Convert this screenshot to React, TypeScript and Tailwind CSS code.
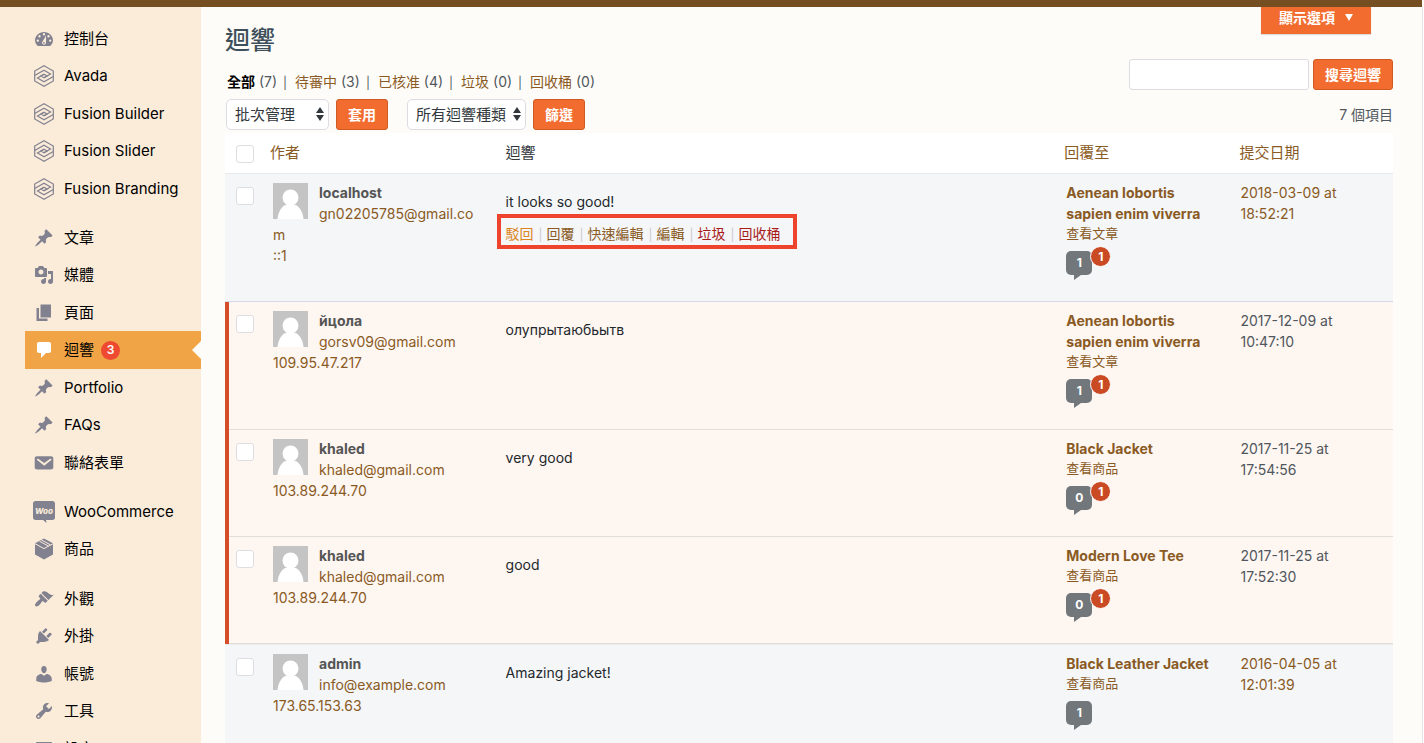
import type { ReactNode } from 'react';

type MenuItem = { label: string; icon: ReactNode; count?: number };

type Comment = {
  id: number;
  author: string;
  email: string;
  ip: string;
  text: string;
  post: string;
  view: string;
  date: string;
  approved: number;
  pending?: number;
  unapproved?: boolean;
  showActions?: boolean;
};

const pin = (
  <Icon d="M10.44 3.02l1.82-1.82 6.36 6.35-1.83 1.82c-1.05-.68-2.48-.57-3.41.36l-.75.75c-.92.93-1.04 2.35-.35 3.41l-1.83 1.82-2.41-2.41-2.8 2.79c-.42.42-3.38 2.71-3.8 2.29s1.86-3.39 2.28-3.81l2.79-2.79L4.1 9.36l1.83-1.82c1.05.69 2.48.57 3.4-.36l.75-.75c.93-.92 1.05-2.35.36-3.41z" />
);

const menu: MenuItem[][] = [
  [
    {
      label: '控制台',
      icon: (
        <Icon d="M3.76 17h12.48C17.34 15.63 19 13.89 19 11.5c0-4.42-4-8.5-9-8.5s-9 4.08-9 8.5c0 2.39 1.66 4.13 2.76 5.5zM10 4a1.2 1.2 0 110 2.4 1.2 1.2 0 010-2.4zM5.5 6a1.2 1.2 0 110 2.4 1.2 1.2 0 010-2.4zm9 0a1.2 1.2 0 110 2.4 1.2 1.2 0 010-2.4zM3.8 10.4a1.2 1.2 0 110 2.4 1.2 1.2 0 010-2.4zm12.4 0a1.2 1.2 0 110 2.4 1.2 1.2 0 010-2.4zM12.1 6.5l-.1 7.2c0 1.2-.9 2-2 2s-2-.8-2-1.9c0-.5.2-1 .6-1.4zM10 12.9a.9.9 0 100 1.8.9.9 0 000-1.8z" />
      ),
    },
    { label: 'Avada', icon: <HexIcon /> },
    { label: 'Fusion Builder', icon: <HexIcon /> },
    { label: 'Fusion Slider', icon: <HexIcon /> },
    { label: 'Fusion Branding', icon: <HexIcon /> },
  ],
  [
    { label: '文章', icon: pin },
    {
      label: '媒體',
      icon: (
        <Icon d="M13 11V4c0-.55-.45-1-1-1h-1.67L9 1H5L3.67 3H2c-.55 0-1 .45-1 1v7c0 .55.45 1 1 1h10c.55 0 1-.45 1-1zM7 4.5c1.38 0 2.5 1.12 2.5 2.5S8.38 9.5 7 9.5 4.5 8.38 4.5 7 5.62 4.5 7 4.5zM14 6h5v10.5c0 1.38-1.12 2.5-2.5 2.5S14 17.88 14 16.5s1.12-2.5 2.5-2.5c.17 0 .34.02.5.05V9h-3V6zm-4 8.05V13h2v3.5c0 1.38-1.12 2.5-2.5 2.5S7 17.88 7 16.5 8.12 14 9.5 14c.17 0 .34.02.5.05z" />
      ),
    },
    { label: '頁面', icon: <Icon d="M6.500 14.500V1.500H17v13H6.500zM5 15.500h8.500V18H2.500V5H5v10.500z" /> },
    {
      label: '迴響',
      icon: <Icon d="M5 2h10c1.100 0 2 .9 2 2v7c0 1.100-.9 2-2 2h-3l-5 5v-5H5c-1.100 0-2-.9-2-2V4c0-1.100.9-2 2-2z" />,
      count: 3,
    },
    { label: 'Portfolio', icon: pin },
    { label: 'FAQs', icon: pin },
    {
      label: '聯絡表單',
      icon: (
        <Icon d="M3.050 3.300h13.900C18.370 3.300 19.300 4 19.300 5.300v9.200c0 1.300-.93 2-2.350 2H3.050c-1.420 0-2.350-.7-2.350-2V5.300c0-1.300.93-2 2.350-2zM10.200 12.800l7.030-5.730c.24-.2.43-.66.13-1.070-.29-.41-.82-.42-1.170-.17l-5.990 4.060L4.200 5.830c-.35-.25-.88-.24-1.170.17-.3.41-.11.870.13 1.070z" />
      ),
    },
  ],
  [
    { label: 'WooCommerce', icon: <WooIcon /> },
    { label: '商品', icon: <BoxIcon /> },
  ],
  [
    {
      label: '外觀',
      icon: (
        <Icon d="M14.48 11.06L7.41 3.99l1.5-1.5c.5-.56 2.3-.47 3.51.32 1.21.8 1.43 1.28 2.91 2.1 1.18.64 2.45 1.26 4.45.85zm-.71.71L6.7 4.7 4.93 6.47c-.39.39-.39 1.02 0 1.41l1.06 1.06c.39.39.39 1.03 0 1.42-.6.6-1.43 1.11-2.21 1.69-.35.26-.7.53-1.01.84C1.43 14.23.4 16.08 1.4 17.07c.99 1 2.84-.03 4.18-1.36.31-.31.58-.66.85-1.02.57-.78 1.08-1.61 1.69-2.21.39-.39 1.02-.39 1.41 0l1.06 1.06c.39.39 1.02.39 1.41 0z" />
      ),
    },
    {
      label: '外掛',
      icon: (
        <Icon d="M13.11 4.36L9.87 7.6 8 5.73l3.24-3.24c.35-.34 1.05-.2 1.56.32.52.51.66 1.21.31 1.55zm-8 1.77l.91-1.12 9.01 9.01-1.19.84c-.71.71-2.63 1.16-3.82 1.16H6.14L4.9 17.26c-.59.59-1.54.59-2.12 0-.59-.58-.59-1.53 0-2.12l1.24-1.24v-3.88c0-1.13.4-3.19 1.09-3.89zm7.26 3.97l3.24-3.24c.34-.35 1.04-.21 1.55.31.52.51.66 1.21.31 1.55l-3.24 3.25z" />
      ),
    },
    {
      label: '帳號',
      icon: (
        <Icon d="M10 9.25c-2.27 0-2.73-3.44-2.73-3.44C7 4.02 7.82 2 9.97 2c2.16 0 2.98 2.02 2.71 3.81 0 0-.41 3.44-2.68 3.44zm0 2.57L12.72 10c2.39 0 5.02 2.33 5.02 4.53v2.49s-3.65 1.53-7.74 1.53c-4.15 0-7.74-1.53-7.74-1.53v-2.49c0-2.25 2.44-4.48 4.97-4.48z" />
      ),
    },
    {
      label: '工具',
      icon: (
        <Icon d="M16.68 9.77c-1.34 1.34-3.3 1.67-4.95.99l-5.41 6.52c-.99.99-2.59.99-3.58 0s-.99-2.59 0-3.57l6.52-5.42c-.68-1.65-.35-3.61.99-4.95 1.28-1.28 3.12-1.62 4.72-1.06l-2.89 2.89 2.82 2.82 2.86-2.87c.53 1.58.18 3.39-1.08 4.65zM3.81 16.21c.4.39 1.04.39 1.43 0 .4-.4.4-1.04 0-1.43-.39-.4-1.03-.4-1.43 0-.39.39-.39 1.03 0 1.43z" />
      ),
    },
    {
      label: '設定',
      icon: (
        <Icon d="M18 16V4c0-.55-.45-1-1-1H3c-.55 0-1 .45-1 1v12c0 .55.45 1 1 1h14c.55 0 1-.45 1-1zM5.5 5h1v4h-1zm4 0h1v7h-1zm4 0h1v3h-1zM4 10h4v2H4zm4 3h4v2H8zm4-4h4v2h-4z" />
      ),
    },
  ],
];

const tabs = [
  { label: '全部', count: 7 },
  { label: '待審中', count: 3 },
  { label: '已核准', count: 4 },
  { label: '垃圾', count: 0 },
  { label: '回收桶', count: 0 },
];

const actions = [
  { label: '駁回', color: 'text-[#dc8420]' },
  { label: '回覆', color: 'text-[#8a5a24]' },
  { label: '快速編輯', color: 'text-[#8a5a24]' },
  { label: '編輯', color: 'text-[#8a5a24]' },
  { label: '垃圾', color: 'text-[#a81c1c]' },
  { label: '回收桶', color: 'text-[#a81c1c]' },
];

const comments: Comment[] = [
  {
    id: 1,
    author: 'localhost',
    email: 'gn02205785@gmail.com',
    ip: '::1',
    text: 'it looks so good!',
    post: 'Aenean lobortis sapien enim viverra',
    view: '查看文章',
    date: '2018-03-09 at 18:52:21',
    approved: 1,
    pending: 1,
    showActions: true,
  },
  {
    id: 2,
    author: 'йцола',
    email: 'gorsv09@gmail.com',
    ip: '109.95.47.217',
    text: 'олупрытаюбьытв',
    post: 'Aenean lobortis sapien enim viverra',
    view: '查看文章',
    date: '2017-12-09 at 10:47:10',
    approved: 1,
    pending: 1,
    unapproved: true,
  },
  {
    id: 3,
    author: 'khaled',
    email: 'khaled@gmail.com',
    ip: '103.89.244.70',
    text: 'very good',
    post: 'Black Jacket',
    view: '查看商品',
    date: '2017-11-25 at 17:54:56',
    approved: 0,
    pending: 1,
    unapproved: true,
  },
  {
    id: 4,
    author: 'khaled',
    email: 'khaled@gmail.com',
    ip: '103.89.244.70',
    text: 'good',
    post: 'Modern Love Tee',
    view: '查看商品',
    date: '2017-11-25 at 17:52:30',
    approved: 0,
    pending: 1,
    unapproved: true,
  },
  {
    id: 5,
    author: 'admin',
    email: 'info@example.com',
    ip: '173.65.153.63',
    text: 'Amazing jacket!',
    post: 'Black Leather Jacket',
    view: '查看商品',
    date: '2016-04-05 at 12:01:39',
    approved: 1,
  },
];

export default function App() {
  return (
    <div className="flex min-h-screen flex-col bg-[#fefcf8] font-['Inter','Noto_Sans_CJK_TC',sans-serif] text-sm text-[#50575d]">
      <div className="mr-0.5 h-[7px] bg-[#754f22]" />
      <div className="flex flex-1">
        <Sidebar />
        <main className="min-w-0 flex-1 pr-[29px] pl-6">
          <div className="flex h-[52px] items-start justify-between">
            <h1 className="pt-4 text-[25px] leading-[34px] font-medium text-[#3d4f5a]">迴響</h1>
            <button
              type="button"
              className="mr-[22px] flex h-[27px] items-center gap-2.5 bg-[#f26c30] px-[18px] pb-1.5 text-sm font-bold text-white shadow-[0_1px_1px_#ddd]"
            >
              顯示選項
              <svg viewBox="0 0 8 7" className="h-[7px] w-2" fill="currentColor">
                <path d="M0 0h8L4 7z" />
              </svg>
            </button>
          </div>

          <div className="flex h-10 items-start justify-between">
            <ul className="flex pt-[13px] pl-0.5 leading-5">
              {tabs.map((tab, i) => (
                <li key={tab.label} className="whitespace-pre">
                  <a href="#" className={i === 0 ? 'font-bold text-black' : 'text-[#8a5a24]'}>
                    {tab.label}
                  </a>
                  {` (${tab.count})`}
                  {i < tabs.length - 1 && <span className="pr-2 pl-1.5 text-xs">|</span>}
                </li>
              ))}
            </ul>
            <form className="flex gap-1" onSubmit={(e) => e.preventDefault()}>
              <input
                type="search"
                aria-label="搜尋迴響"
                className="h-[31px] w-[180px] rounded-[3px] border border-[#dcdce2] bg-white px-2"
              />
              <Button>搜尋迴響</Button>
            </form>
          </div>

          <div className="mb-[3px] flex items-center justify-between">
            <div className="flex items-center pl-px">
              <Select label="批次管理" width="w-[103px]" />
              <div className="mr-[19px] ml-[7px] flex">
                <Button>套用</Button>
              </div>
              <Select label="所有迴響種類" width="w-[119px]" />
              <div className="ml-[7px] flex">
                <Button>篩選</Button>
              </div>
            </div>
            <span>7 個項目</span>
          </div>

          <CommentTable />
        </main>
        <div className="w-0.5 border-l border-[#e4e4ea] bg-white" />
      </div>
    </div>
  );
}

function Sidebar() {
  return (
    <aside className="w-[201px] shrink-0 bg-[#fbecda] pt-[13px] pl-[25px]">
      <nav className="flex flex-col gap-3">
        {menu.map((group) => (
          <ul key={group[0].label}>
            {group.map((item) => (
              <li key={item.label} className="odd:h-[37px] even:h-[38px]">
                <a
                  href="#"
                  className={
                    item.count
                      ? 'relative flex h-full items-center gap-2.5 bg-[#f0a445] pl-[9px] text-[15px] text-black'
                      : 'flex h-full items-center gap-2.5 pl-[9px] text-[15px] text-black'
                  }
                >
                  <span className={item.count ? 'text-white' : 'text-[#82818f]'}>{item.icon}</span>
                  {item.label}
                  {item.count && (
                    <>
                      <span className="-ml-[3px] flex size-[19px] items-center justify-center rounded-full bg-[#ee4a31] text-xs font-semibold text-white">
                        {item.count}
                      </span>
                      <svg viewBox="0 0 9 18" className="absolute right-0 h-[18px] w-[9px]" fill="#fefcf8">
                        <path d="M9 0v18L0 9z" />
                      </svg>
                    </>
                  )}
                </a>
              </li>
            ))}
          </ul>
        ))}
      </nav>
    </aside>
  );
}

function CommentTable() {
  return (
    <table className="w-full table-fixed border-separate border-spacing-0 text-left">
      <thead className="bg-white text-[15px] leading-5">
        <tr>
          <th className="h-10 w-[37px] pt-0.5 pl-[11px]">
            <Checkbox label="全選" />
          </th>
          <th className="w-[20%] pl-2 font-normal">
            <a href="#" className="text-[#8a5a24]">作者</a>
          </th>
          <th className="pl-2.5 font-normal text-[#32373c]">迴響</th>
          <th className="w-[15%] pl-2.5 font-normal">
            <a href="#" className="text-[#8a5a24]">回覆至</a>
          </th>
          <th className="w-[14%] pl-2.5 font-normal">
            <a href="#" className="text-[#8a5a24]">提交日期</a>
          </th>
        </tr>
      </thead>
      <tbody className="align-top leading-[21px]">
        {comments.map((c) => (
          <CommentRow key={c.id} comment={c} />
        ))}
      </tbody>
    </table>
  );
}

function CommentRow({ comment: c }: { comment: Comment }) {
  const line = c.unapproved ? 'border-b border-[#e1dfdc]' : 'border-y border-t-[#e9eaec] border-b-[#d5dae4]';
  return (
    <tr className={c.unapproved ? 'bg-[#fef6f1]' : 'bg-[#f4f6f8]'}>
      <td
        className={
          c.unapproved
            ? 'pt-[13px] pl-[11px] shadow-[inset_4px_0_0_#d54e2a,inset_0_-1px_0_#e1dfdc]'
            : `pt-[13px] pl-[11px] ${line}`
        }
      >
        <Checkbox label={`選取 ${c.author}`} />
      </td>
      <td className={`pt-2 pr-4 pl-[11px] break-all ${line}`}>
        <Avatar />
        <strong className="font-bold text-[#555]">{c.author}</strong>
        <br />
        <a href="#" className="text-[#8a5a24]">{c.email}</a>
        <br />
        <a href="#" className="text-[#8a5a24]">{c.ip}</a>
      </td>
      <td className={`pt-[17px] pl-2.5 ${line}`}>
        <p className="leading-[22px] text-[#23282d]">{c.text}</p>
        {c.showActions && (
          <div className="mt-px -ml-[9px] flex h-[35px] w-fit items-center border-4 border-[#ee432d] pt-1 pr-3 pl-[5px]">
            {actions.map((a, i) => (
              <span key={a.label}>
                {i > 0 && <span className="pr-1 pl-[5px] text-xs text-[#ccc]">|</span>}
                <a href="#" className={a.color}>{a.label}</a>
              </span>
            ))}
          </div>
        )}
      </td>
      <td className={`pt-2 pr-2.5 pb-[26px] pl-3 ${line}`}>
        <a href="#" className="block font-bold text-[#8a5a24]">{c.post}</a>
        <a href="#" className="block text-[13px] leading-[18px] text-[#8a5a24]">{c.view}</a>
        <Bubble approved={c.approved} pending={c.pending} />
      </td>
      <td className={`pt-2 pr-8 pl-[11px] ${line}`}>
        {c.unapproved ? c.date : <a href="#" className="text-[#8a5a24]">{c.date}</a>}
      </td>
    </tr>
  );
}

function Bubble({ approved, pending }: { approved: number; pending?: number }) {
  return (
    <a href="#" className="relative mt-[9px] flex h-6 w-[26px] items-center justify-center rounded-[5px] bg-[#72777c] text-xs font-bold text-white">
      {approved}
      <svg viewBox="0 0 7 5" className="absolute top-full left-2 h-[5px] w-[7px]" fill="#72777c">
        <path d="M0 0h7L0 5z" />
      </svg>
      {pending && (
        <span className="absolute -top-[5px] left-6 flex size-[21px] items-center justify-center rounded-full border border-white bg-[#ca4a24] text-xs">
          {pending}
        </span>
      )}
    </a>
  );
}

function Button({ children }: { children: ReactNode }) {
  return (
    <button
      type="button"
      className="h-[31px] rounded-[3px] border border-[#cf5a22] bg-[#f26c30] px-[11px] text-sm font-bold text-white"
    >
      {children}
    </button>
  );
}

function Select({ label, width }: { label: string; width: string }) {
  return (
    <div className={`relative ${width}`}>
      <select
        aria-label={label}
        className="h-[31px] w-full appearance-none rounded-[5px] border border-[#dcdce2] bg-white pl-2 text-[15px] text-[#32373c]"
      >
        <option>{label}</option>
      </select>
      <svg viewBox="0 0 8 14" className="pointer-events-none absolute top-2 right-[5px] h-3.5 w-2" fill="#32373c">
        <path d="M4 0l4 6H0zM0 8h8l-4 6z" />
      </svg>
    </div>
  );
}

function Checkbox({ label }: { label: string }) {
  return (
    <input
      type="checkbox"
      aria-label={label}
      className="block size-[18px] appearance-none rounded-[3px] border border-[#dedee2] bg-white checked:bg-[#f26c30]"
    />
  );
}

function Avatar() {
  return (
    <svg viewBox="0 0 35 36" className="float-left mt-px mr-[11px] h-9 w-[35px]">
      <path d="M0 0h35v36H0z" fill="#c4c4c4" />
      <circle cx="17.5" cy="14.5" r="8" fill="#fff" />
      <path d="M4.500 36c.8-8 4.500-13.500 9.500-14.500h7c5 1 8.700 6.500 9.500 14.500z" fill="#fff" />
    </svg>
  );
}

function Icon({ d }: { d: string }) {
  return (
    <svg viewBox="0 0 20 20" className="size-5" fill="currentColor" fillRule="evenodd">
      <path d={d} />
    </svg>
  );
}

function HexIcon() {
  return (
    <svg viewBox="0 0 20 22" className="h-[22px] w-5" fill="none" stroke="currentColor" strokeWidth="1.2">
      <path d="M10 .8l9.300 5.200v10L10 21.200.7 16V6z" />
      <path d="M.7 10.500L10 5.200l6.500 3.700-6.500 3.800L7 11l3-1.700" />
      <path d="M19.300 11.500L10 16.800l-6.500-3.700L10 9.300l3 1.700-3 1.700" />
    </svg>
  );
}

function WooIcon() {
  return (
    <svg viewBox="0 0 22 22" className="-mx-px size-[22px]" fill="currentColor">
      <path d="M2.500 0h17C21 0 22 1 22 2.500v14c0 1.500-1 2.500-2.500 2.500H13l.500 3-3.500-3H2.500C1 19 0 18 0 16.500v-14C0 1 1 0 2.500 0z" />
      <text x="11" y="12.500" textAnchor="middle" fontSize="8" fontWeight="800" fontStyle="italic" fill="#fbecda">
        Woo
      </text>
    </svg>
  );
}

function BoxIcon() {
  return (
    <svg viewBox="0 0 20 22" className="h-[22px] w-5">
      <path d="M10 .5l9 4.800v11.200l-9 5-9-5V5.300z" fill="currentColor" />
      <path d="M.8 5.600l9.200 5 9.200-5M5.500 3.200l9 4.900M7.500 2l9 4.900" fill="none" stroke="#fbecda" strokeWidth="1" />
    </svg>
  );
}
